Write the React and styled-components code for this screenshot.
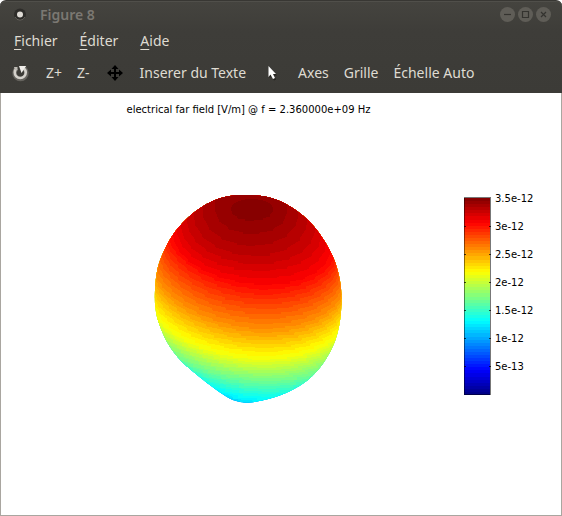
import React from "react";
import styled, { createGlobalStyle } from "styled-components";

const GlobalStyle = createGlobalStyle`
  * { box-sizing: border-box; }
  body { margin: 0; background: #fff; }
`;

const Window = styled.div`
  display: flex;
  flex-direction: column;
  min-height: 100vh;
  font-family: "Noto Sans", "Open Sans", sans-serif;
`;

const Chrome = styled.header`
  height: 93px;
  border-radius: 6px 6px 0 0;
  background: linear-gradient(#45443f, #3e3d39 30px, #3c3b37);
  border-top: 1px solid #383733;
  box-shadow: inset 0 1px #504f4a;
  color: #dfdbd2;
`;

const TitleBar = styled.div`
  display: flex;
  align-items: center;
  height: 27px;
  padding: 0 11px 0 13px;
`;

const WindowTitle = styled.h1`
  flex: 1;
  margin: 0 0 0 12px;
  font-size: 14px;
  line-height: 20px;
  font-weight: 600;
  color: #7b7872;
`;

const WindowControls = styled.div`
  display: flex;
  gap: 3px;
`;

const PlainButton = styled.button`
  display: flex;
  align-items: center;
  padding: 0;
  border: 0;
  background: none;
  color: inherit;
  font: inherit;
  white-space: nowrap;
`;

const MenuBar = styled.nav`
  display: flex;
  align-items: center;
  gap: 22px;
  height: 26px;
  padding-left: 14px;
  font-size: 14px;
  line-height: 20px;
`;

const MenuButton = styled(PlainButton)`
  display: block;
`;

const Mnemonic = styled.span`
  text-decoration: underline;
  text-decoration-thickness: 1px;
  text-underline-offset: 3px;
  text-decoration-skip-ink: none;
`;

const ToolBar = styled.div`
  display: flex;
  align-items: center;
  gap: 15px;
  height: 38px;
  padding-left: 10px;
  font-size: 14px;
  line-height: 20px;
`;

const Canvas = styled.main`
  flex: 1;
  display: grid;
  grid-template-columns: minmax(0, 1fr) 97px;
  grid-template-rows: 32px auto;
  align-content: start;
  row-gap: 70px;
  border: solid #a9a6a0;
  border-width: 0 1px 1px;
  background: #fff;
  color: #000;
  font-family: "DejaVu Sans", sans-serif;
  font-size: 10px;
  line-height: 12px;
`;

const PlotTitle = styled.h2`
  margin: 0;
  padding: 11px 0 0 32px;
  text-align: center;
  font: inherit;
  white-space: nowrap;
`;

const PlotArea = styled.div`
  grid-column: 1;
  display: flex;
  justify-content: center;
  padding-left: 30px;
`;

const ColorBar = styled.div`
  grid-column: 2;
  display: flex;
  align-items: flex-start;
  gap: 4px;
  padding-top: 2px;
`;

const ScaleLabels = styled.ul`
  display: grid;
  grid-auto-rows: 28px;
  margin: -12px 0 0;
  padding: 0;
  list-style: none;
  line-height: 28px;
`;

const LEVELS = 64;

function jet(k) {
  const v = (k + 0.5) / LEVELS;
  const channel = (c) =>
    Math.round(255 * Math.max(0, Math.min(1, 1.5 - Math.abs(4 * v - c))));
  return `rgb(${channel(3)},${channel(2)},${channel(1)})`;
}

/* Level, left end (x, y), height at the middle, right end (x, y). */
const CONTOURS = [
  [64, 231, 209, 221, 273, 209],
  [63, 215, 210, 234, 287, 212],
  [62, 203, 213, 246, 298, 216],
  [61, 194, 217, 256, 307, 222],
  [60, 187, 221, 264, 315, 229],
  [59, 181, 226, 271, 321, 236],
  [58, 177, 230, 278, 326, 243],
  [57, 173, 234, 284, 330, 250],
  [56, 169, 239, 289, 334, 257],
  [48, 155, 272, 328, 342, 293],
  [40, 154, 312, 359, 342, 329],
  [32, 158, 337, 380, 336, 357],
  [24, 180, 361, 400, 305, 386],
  [20, 188, 371, 405, 294, 394],
];

function contourAt(level) {
  const i = CONTOURS.findIndex((c) => c[0] <= level);
  if (i === 0 || CONTOURS[i][0] === level) return CONTOURS[i];
  const hi = CONTOURS[i - 1];
  const lo = CONTOURS[i];
  const t = (level - lo[0]) / (hi[0] - lo[0]);
  return lo.map((v, j) => v + (hi[j] - v) * t);
}

function bandPath(level) {
  const [, xl, yl, mid, xr, yr] = contourAt(level);
  const sag = mid - (yl + yr) / 2;
  const power = level > 56 ? 0.5 : 0.64;
  const y = (x) => {
    const t = Math.max(0, Math.min(1, (x - xl) / (xr - xl)));
    return yl + (yr - yl) * t + sag * Math.pow(1 - (2 * t - 1) ** 2, power);
  };
  const steps = Math.max(7, Math.round((xr - xl) / 12));
  const phase = (level * 0.27) % 1;
  const facetX = (i) => {
    const angle = Math.PI * Math.max(0, Math.min(1, (i - phase) / steps));
    return xl + ((xr - xl) * (1 - Math.cos(angle))) / 2;
  };
  const limit = (d) => Math.max(-1, Math.min(1, d));
  const points = [[xl, yl]];
  for (let i = 0; i <= steps; i++) {
    const a = facetX(i);
    const b = facetX(i + 1);
    const m = y((a + b) / 2);
    const ya = y(a);
    const yb = y(b);
    points.push([a, ya + limit((m - ya) * 0.8)]);
    points.push([b, yb + limit((m - yb) * 0.8)]);
  }
  points.push([xr, yr]);
  const line = points.map((p) => p.map((n) => n.toFixed(1)).join(",")).join("L");
  const top = level === 64 ? `A21,10 0 0 0 ${xl},${yl}` : `V190H${xl}`;
  return `M${line}${top}Z`;
}

const OUTLINE = [
  [246, 195], [265, 196.5], [282, 202], [299, 212.5], [313.5, 226], [326, 243.5],
  [335, 262], [340, 281], [341.5, 299], [340.5, 317], [337.5, 333],
  [332, 348], [322, 365], [308, 380], [290, 391], [270, 398.5], [250, 402.5],
  [238, 401.5], [227, 397], [210, 385], [190, 369], [178, 357.5], [167, 342],
  [158.5, 322], [155.3, 307], [155, 290], [157.5, 269], [164, 251], [173.5, 234],
  [186, 219.5], [199.5, 208.5], [214, 200.5], [230, 196],
];

function smoothClosed(p) {
  const n = p.length;
  let d = `M${p[0]}`;
  for (let i = 0; i < n; i++) {
    const [a, b, c, e] = [p[(i + n - 1) % n], p[i], p[(i + 1) % n], p[(i + 2) % n]];
    d += `C${b[0] + (c[0] - a[0]) / 6},${b[1] + (c[1] - a[1]) / 6} ${c[0] - (e[0] - b[0]) / 6},${c[1] - (e[1] - b[1]) / 6} ${c}`;
  }
  return `${d}Z`;
}

const BANDS = Array.from({ length: 45 }, (_, i) => i + 20);

function FarField() {
  return (
    <svg width="188" height="209" viewBox="154 195 188 209" role="img" aria-label="electrical far field">
      <clipPath id="lobe">
        <path d={smoothClosed(OUTLINE)} />
      </clipPath>
      <g clipPath="url(#lobe)">
        <rect x="150" y="190" width="200" height="220" fill={jet(20)} />
        {BANDS.map((k) => (
          <path key={k} d={bandPath(k)} fill={jet(k - 1)} shapeRendering="crispEdges" />
        ))}
      </g>
    </svg>
  );
}

function ColorScale() {
  return (
    <svg width="27" height="198" viewBox="0 0 27 198" shapeRendering="crispEdges" aria-hidden="true">
      {Array.from({ length: LEVELS }, (_, i) => {
        const y0 = Math.round((i * 197) / LEVELS);
        const y1 = Math.round(((i + 1) * 197) / LEVELS);
        return <rect key={i} x="0" y={y0 + 1} width="27" height={y1 - y0} fill={jet(LEVELS - 1 - i)} />;
      })}
      <path d="M0 .5H27M26.5 0V198" stroke="#777" fill="none" />
      <path d="M.5 1V198M0 197.5H26" stroke="#000" strokeOpacity=".45" fill="none" />
      {[1, 2, 3, 4, 5, 6].map((n) => (
        <path key={n} d={`M0 ${n * 28 + 1.5}h2m23 0h2`} stroke="#000" strokeOpacity=".7" />
      ))}
    </svg>
  );
}

function AppIcon() {
  return (
    <svg width="15" height="15" viewBox="0 0 15 15" aria-hidden="true">
      <circle cx="7" cy="7.5" r="6" fill="#2d2c29" />
      <path d="M2 10a5.500 5.500 0 0 0 10 0" stroke="#64625c" fill="none" />
      <circle cx="7" cy="7.500" r="3" fill="#dedbd5" />
    </svg>
  );
}

function ControlIcon({ mark }) {
  return (
    <svg width="15" height="15" viewBox="0 0 15 15" aria-hidden="true">
      <circle cx="7.5" cy="7.5" r="7.5" fill="#5f5d57" />
      <path d={mark} stroke="#34332f" strokeWidth="1.2" fill="none" />
    </svg>
  );
}

function ResetIcon() {
  return (
    <svg width="21" height="20" viewBox="0 0 21 20" aria-hidden="true">
      <path d="M6.500 5.500A6 6 0 1 0 14.500 5.500" stroke="#65635e" strokeWidth="4.500" fill="none" />
      <path d="M6.500 5.500A5.500 5.500 0 1 0 14 5.500" stroke="#d4d1cb" strokeWidth="2.600" fill="none" />
      <path d="M9 3H16.200L14.500 5.500L11.500 10Z" fill="#efede9" />
      <path d="M4 4H7.500V7H5Z" fill="#bdbab4" />
    </svg>
  );
}

function MoveIcon() {
  return (
    <svg width="20" height="20" viewBox="1 0 20 20" aria-hidden="true">
      <path d="M11 3V17M4 10H18" stroke="#000" strokeWidth="2" />
      <path d="M11 2l3.500 4h-7ZM11 18l3.500-4h-7ZM3 10l4-3.500v7ZM19 10l-4-3.500v7Z" fill="#000" />
    </svg>
  );
}

function PointerIcon() {
  return (
    <svg width="22" height="20" viewBox="0 0 22 20" aria-hidden="true">
      <path d="M8.500 4V15L10.500 13L13 17.500L15 16.500L13 12.500H16Z" fill="#24231f" />
      <path d="M7.500 3V14L9.500 11.500L12 16L14 15L12 11H15Z" fill="#fff" />
    </svg>
  );
}

const MENUS = ["Fichier", "Éditer", "Aide"];

const TOOLS = [
  { label: "Réinitialiser", Icon: ResetIcon },
  { label: "Z+" },
  { label: "Z-" },
  { label: "Déplacer", Icon: MoveIcon },
  { label: "Inserer du Texte" },
  { label: "Sélectionner", Icon: PointerIcon },
  { label: "Axes" },
  { label: "Grille" },
  { label: "Échelle Auto" },
];

const CONTROLS = [
  { label: "Réduire", mark: "M4 7.5H11" },
  { label: "Agrandir", mark: "M4.500 4.500H10.500V10.500H4.500Z" },
  { label: "Fermer", mark: "M5 5L10 10M10 5L5 10" },
];

const TICKS = ["3.5e-12", "3e-12", "2.5e-12", "2e-12", "1.5e-12", "1e-12", "5e-13"];

export default function App() {
  return (
    <Window>
      <GlobalStyle />
      <Chrome>
        <TitleBar>
          <AppIcon />
          <WindowTitle>Figure 8</WindowTitle>
          <WindowControls>
            {CONTROLS.map(({ label, mark }) => (
              <PlainButton key={label} type="button" aria-label={label}>
                <ControlIcon mark={mark} />
              </PlainButton>
            ))}
          </WindowControls>
        </TitleBar>
        <MenuBar>
          {MENUS.map((name) => (
            <MenuButton key={name} type="button">
              <Mnemonic>{name[0]}</Mnemonic>
              {name.slice(1)}
            </MenuButton>
          ))}
        </MenuBar>
        <ToolBar role="toolbar">
          {TOOLS.map(({ label, Icon }) => (
            <PlainButton key={label} type="button" aria-label={Icon && label}>
              {Icon ? <Icon /> : label}
            </PlainButton>
          ))}
        </ToolBar>
      </Chrome>
      <Canvas>
        <PlotTitle>electrical far field [V/m] @ f = 2.360000e+09 Hz</PlotTitle>
        <PlotArea>
          <FarField />
        </PlotArea>
        <ColorBar>
          <ColorScale />
          <ScaleLabels>
            {TICKS.map((t) => (
              <li key={t}>{t}</li>
            ))}
          </ScaleLabels>
        </ColorBar>
      </Canvas>
    </Window>
  );
}
